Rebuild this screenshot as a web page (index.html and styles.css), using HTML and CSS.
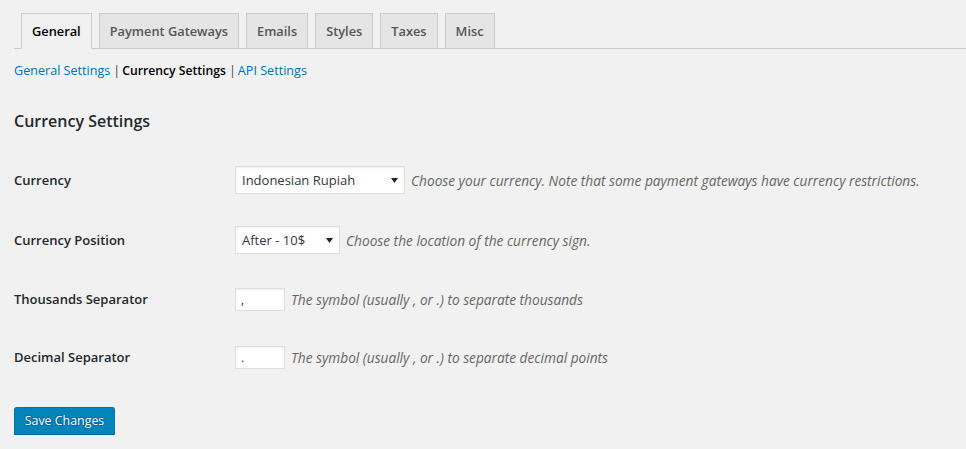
FILE: index.html
```html
<!DOCTYPE html>
<html lang="en">
<head>
<meta charset="utf-8">
<title>Currency Settings</title>
<link rel="stylesheet" href="styles.css">
</head>
<body>
<div class="wrap">
  <nav class="tabs">
    <a class="tab tab-active" href="#">General</a>
    <a class="tab" href="#">Payment Gateways</a>
    <a class="tab" href="#">Emails</a>
    <a class="tab" href="#">Styles</a>
    <a class="tab" href="#">Taxes</a>
    <a class="tab" href="#">Misc</a>
  </nav>
  <ul class="subnav">
    <li><a href="#">General Settings</a><span class="sep">|</span></li>
    <li><a class="current" href="#">Currency Settings</a><span class="sep">|</span></li>
    <li><a href="#">API Settings</a></li>
  </ul>
  <h2 class="title">Currency Settings</h2>
  <div class="form">
    <div class="row row-tall">
      <div class="label">Currency</div>
      <div class="field">
        <div class="select select-wide"><span>Indonesian Rupiah</span><svg width="7" height="5" viewBox="0 0 7 5"><path d="M0 0H7L3.5 5Z" fill="#222"/></svg></div>
        <span class="desc">Choose your currency. Note that some payment gateways have currency restrictions.</span>
      </div>
    </div>
    <div class="row row-tall">
      <div class="label">Currency Position</div>
      <div class="field">
        <div class="select select-narrow"><span>After - 10$</span><svg width="7" height="5" viewBox="0 0 7 5"><path d="M0 0H7L3.5 5Z" fill="#222"/></svg></div>
        <span class="desc">Choose the location of the currency sign.</span>
      </div>
    </div>
    <div class="row">
      <div class="label">Thousands Separator</div>
      <div class="field">
        <div class="input">,</div>
        <span class="desc">The symbol (usually , or .) to separate thousands</span>
      </div>
    </div>
    <div class="row">
      <div class="label">Decimal Separator</div>
      <div class="field">
        <div class="input">.</div>
        <span class="desc">The symbol (usually , or .) to separate decimal points</span>
      </div>
    </div>
  </div>
  <button class="button-primary" type="button">Save Changes</button>
</div>
</body>
</html>
```
FILE: styles.css
```css
html, body {
  margin: 0;
  padding: 0;
  background: #f1f1f1;
}
body {
  font-family: "Open Sans", "Noto Sans", sans-serif;
  font-size: 13px;
  color: #444;
}
.wrap {
  padding-left: 14px;
}
.tabs {
  display: flex;
  gap: 7px;
  padding: 13px 0 0 7px;
  border-bottom: 1px solid #ccc;
  height: 35px;
}
.tab {
  display: block;
  padding: 5px 10px;
  line-height: 24px;
  font-size: 12.8px;
  font-weight: 600;
  color: #555;
  background: #e5e5e5;
  border: 1px solid #ccc;
  border-bottom: none;
  text-decoration: none;
}
.tab-active {
  background: #f1f1f1;
  color: #000;
  border-bottom: 1px solid #f1f1f1;
  height: 24px;
}
.subnav {
  list-style: none;
  margin: 9px 0 0;
  padding: 0;
  display: flex;
  line-height: 26px;
  font-size: 12.6px;
}
.subnav a {
  color: #0073aa;
  text-decoration: none;
}
.subnav a.current {
  color: #000;
  font-weight: 600;
  font-size: 12.2px;
}
.sep {
  color: #444;
  padding: 0 2px 0 3px;
}
.title {
  margin: 25px 0 0;
  font-size: 16px;
  line-height: 24px;
  font-weight: 600;
  color: #23282d;
}
.form {
  margin-top: 17px;
}
.row {
  display: grid;
  grid-template-columns: 221px 1fr;
  align-items: center;
  height: 58px;
}
.row-tall {
  height: 60px;
}
.label {
  font-size: 13px;
  font-weight: 600;
  color: #23282d;
}
.field {
  display: flex;
  align-items: center;
  gap: 6px;
}
.select {
  box-sizing: border-box;
  height: 28px;
  display: flex;
  align-items: center;
  justify-content: space-between;
  padding: 0 6px 0 6px;
  background: #fff;
  border: 1px solid #ddd;
  box-shadow: inset 0 1px 2px rgba(0,0,0,.07);
  font-size: 13px;
  color: #32373c;
}
.select-wide {
  width: 170px;
}
.select-narrow {
  width: 105px;
}
.input {
  box-sizing: border-box;
  width: 50px;
  height: 23px;
  padding: 0 5px;
  background: #fff;
  border: 1px solid #ddd;
  box-shadow: inset 0 1px 2px rgba(0,0,0,.07);
  font-size: 12px;
  line-height: 21px;
  color: #32373c;
}
.desc {
  font-size: 13.7px;
  font-style: italic;
  color: #666;
}
.button-primary {
  display: block;
  margin-top: 21px;
  box-sizing: border-box;
  width: 101px;
  height: 28px;
  padding: 0 0 1px;
  white-space: nowrap;
  font-family: inherit;
  font-size: 12.4px;
  line-height: 26px;
  color: #fff;
  background: #0085ba;
  border: 1px solid #0073aa;
  border-bottom-color: #006799;
  border-radius: 3px;
  box-shadow: 0 1px 0 #006799;
  text-shadow: 0 -1px 1px #006799, 1px 0 1px #006799, 0 1px 1px #006799, -1px 0 1px #006799;
  cursor: pointer;
}
```
